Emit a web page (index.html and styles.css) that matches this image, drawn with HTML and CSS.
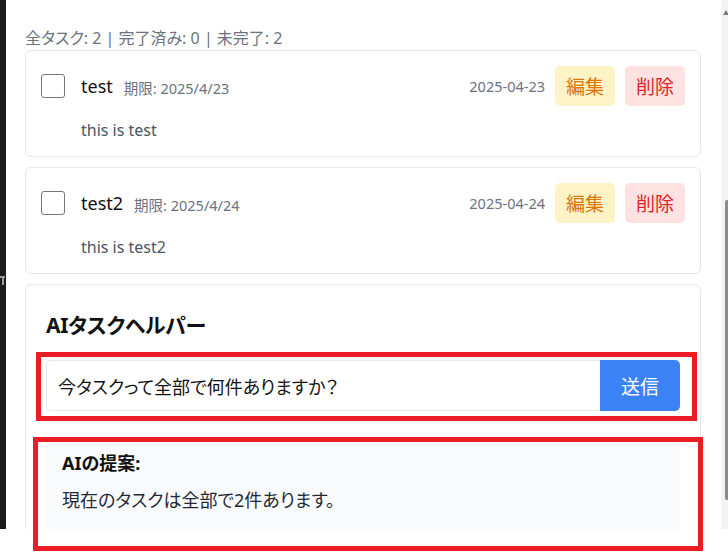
FILE: index.html
```html
<!DOCTYPE html>
<html lang="ja">
<head>
<meta charset="utf-8">
<title>タスク</title>
<link rel="stylesheet" href="styles.css">
</head>
<body>
<div class="window">
  <div class="strip"><span class="strip-mark"></span></div>
  <main class="content">
    <p class="stats">全タスク: 2 | 完了済み: 0 | 未完了: 2</p>

    <div class="card task">
      <div class="task-row">
        <input type="checkbox" class="check">
        <span class="task-title">test</span>
        <span class="task-due">期限: 2025/4/23</span>
        <span class="task-date">2025-04-23</span>
        <button class="btn btn-edit">編集</button>
        <button class="btn btn-delete">削除</button>
      </div>
      <p class="task-desc">this is test</p>
    </div>

    <div class="card task">
      <div class="task-row">
        <input type="checkbox" class="check">
        <span class="task-title">test2</span>
        <span class="task-due">期限: 2025/4/24</span>
        <span class="task-date">2025-04-24</span>
        <button class="btn btn-edit">編集</button>
        <button class="btn btn-delete">削除</button>
      </div>
      <p class="task-desc">this is test2</p>
    </div>

    <div class="card ai">
      <h2 class="ai-title">AIタスクヘルパー</h2>
      <div class="ai-form">
        <input class="ai-input" type="text" value="今タスクって全部で何件ありますか？">
        <button class="ai-send">送信</button>
      </div>
      <div class="ai-result">
        <p class="ai-result-head">AIの提案:</p>
        <p class="ai-result-text">現在のタスクは全部で2件あります。</p>
      </div>
    </div>
  </main>
  <div class="scrollbar">
    <span class="sb-arrow"></span>
    <span class="sb-thumb"></span>
  </div>
</div>
<div class="annot annot-input"></div>
<div class="annot annot-result"></div>
</body>
</html>
```

FILE: styles.css
```css
* { box-sizing: border-box; }

html, body {
  margin: 0;
  padding: 0;
  background: #ffffff;
}

body {
  font-family: "Noto Sans", "Noto Sans CJK JP", sans-serif;
  font-feature-settings: "palt";
  color: #111827;
  position: relative;
  width: 728px;
  height: 552px;
  overflow: hidden;
}

.window {
  display: flex;
  height: 529px;
  overflow: hidden;
}

.strip {
  width: 6px;
  background: #1b1b1b;
  padding-top: 276px;
  overflow: hidden;
}

.strip-mark {
  display: block;
  width: 5px;
  height: 9px;
  border-top: 2px solid #9a9a9a;
  background: linear-gradient(#9a9a9a, #9a9a9a) no-repeat 2px 0 / 2px 100%;
}

.content {
  flex: 1;
  padding: 28px 20px 0 19px;
}

.stats {
  margin: 0 0 2px;
  font-size: 16px;
  line-height: 20px;
  color: #6b7280;
}

.card {
  border: 1px solid #e5e7eb;
  border-radius: 6px;
  background: #ffffff;
}

.task {
  padding: 15px 15px 14px 15px;
  margin-bottom: 10px;
}

.task-row {
  display: flex;
  align-items: center;
  height: 40px;
}

.check {
  appearance: none;
  -webkit-appearance: none;
  width: 24px;
  height: 24px;
  margin: 0 16px 0 0;
  border: 1px solid #767676;
  border-radius: 3px;
  background: #fff;
}

.task-title {
  font-size: 18px;
  color: #111111;
}

.task-due {
  margin-left: 11px;
  font-size: 14.5px;
  color: #6b7280;
  padding-top: 3px;
}

.task-date {
  margin-left: auto;
  margin-right: 10px;
  font-size: 14.5px;
  color: #6b7280;
}

.btn {
  width: 60px;
  height: 40px;
  border: none;
  border-radius: 5px;
  font-family: inherit;
  font-size: 19px;
  padding: 0;
}

.btn-edit {
  background: #fef3c7;
  color: #d97706;
}

.btn-delete {
  margin-left: 10px;
  background: #fee2e2;
  color: #dc2626;
}

.task-desc {
  margin: 12px 0 0 40px;
  font-size: 16px;
  line-height: 24px;
  color: #4b5563;
}

.ai {
  padding: 20px;
}

.ai-title {
  margin: 0 0 15px;
  font-size: 21px;
  letter-spacing: -0.3px;
  line-height: 40px;
  font-weight: bold;
  color: #111111;
}

.ai-form {
  display: flex;
  height: 51px;
}

.ai-input {
  flex: 1;
  min-width: 0;
  border: 1px solid #e5e7eb;
  border-right: none;
  border-radius: 5px 0 0 5px;
  padding: 0 0 0 11px;
  font-family: inherit;
  font-feature-settings: "palt";
  font-size: 18px;
  color: #111111;
  background: #fff;
}

.ai-send {
  width: 80px;
  border: none;
  border-radius: 0 5px 5px 0;
  background: #3b82f6;
  color: #ffffff;
  font-family: inherit;
  font-size: 19px;
}

.ai-result {
  margin-top: 21px;
  background: #f9fafb;
  padding: 16px 16px 30px;
}

.ai-result-head {
  margin: 0;
  font-size: 18px;
  line-height: 30px;
  font-weight: bold;
  color: #111111;
}

.ai-result-text {
  margin: 7px 0 0;
  font-size: 18px;
  line-height: 30px;
  color: #1f2937;
}

.scrollbar {
  width: 7px;
  background: #f3f3f3;
  display: flex;
  flex-direction: column;
  align-items: flex-end;
  padding-top: 10px;
}

.sb-arrow {
  width: 0;
  height: 0;
  border-left: 3px solid transparent;
  border-right: 3px solid transparent;
  border-bottom: 5px solid #7a7a7a;
  margin-right: -1px;
}

.sb-thumb {
  width: 3px;
  height: 300px;
  margin-top: 185px;
  background: #8a8a8a;
  border-radius: 2px 0 0 2px;
}

.annot {
  position: absolute;
  border: 5px solid #ec1c24;
  pointer-events: none;
}

.annot-input {
  left: 36px;
  top: 352px;
  width: 661px;
  height: 69px;
}

.annot-result {
  left: 33px;
  top: 437px;
  width: 670px;
  height: 114px;
}
```
